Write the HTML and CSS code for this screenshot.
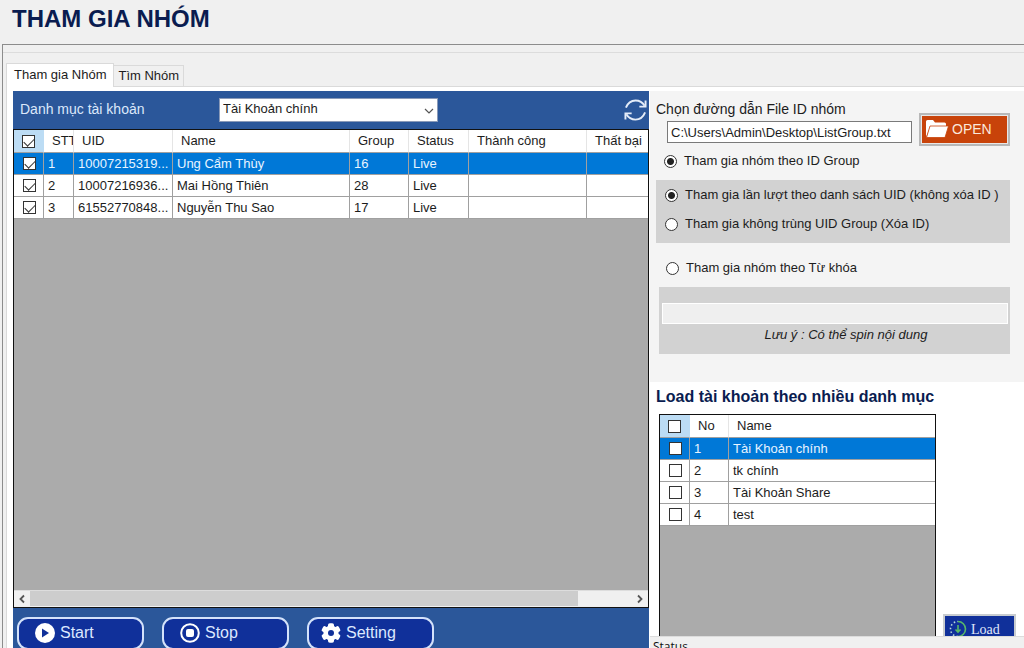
FILE: index.html
```html
<!DOCTYPE html>
<html lang="vi">
<head>
<meta charset="utf-8">
<title>Tham gia nhóm</title>
<link rel="stylesheet" href="styles.css">
</head>
<body>
<header class="title-bar"><h1>THAM GIA NHÓM</h1></header>
<main class="frame">
  <div class="frame-inner">
    <nav class="tabs" role="tablist">
      <button class="tab tab-active" role="tab" aria-selected="true">Tham gia Nhóm</button>
      <button class="tab" role="tab" aria-selected="false">Tìm Nhóm</button>
    </nav>
    <div class="page">
      <section class="accounts">
        <div class="toolbar">
          <label class="toolbar-label" for="category">Danh mục tài khoản</label>
          <div class="combo">
            <select id="category"><option>Tài Khoản chính</option></select>
            <svg class="combo-arrow" viewBox="0 0 10 6"><path d="M1 1l4 4 4-4" fill="none" stroke="#555" stroke-width="1.2"/></svg>
          </div>
          <button class="refresh" aria-label="Refresh">
            <svg viewBox="0 0 24 24" fill="none" stroke="#e4ecf8" stroke-width="2"><path d="M2 9.500C4 4.500 8 2 12 2s7.500 2 9.500 5.500M22 14.500C20 19.500 16 22 12 22s-7.500-2-9.500-5.500"/><path d="M22.500 2v6.500H16M1.500 22v-6.500H8"/></svg>
          </button>
        </div>
        <div class="grid">
          <table class="table">
            <colgroup><col class="c-check"><col class="c-stt"><col class="c-uid"><col><col class="c-small"><col class="c-status"><col class="c-success"><col class="c-fail"></colgroup>
            <thead><tr><th class="check-head"><input type="checkbox" class="check" aria-label="All accounts" checked></th><th>STT</th><th>UID</th><th>Name</th><th>Group</th><th>Status</th><th>Thành công</th><th>Thất bại</th></tr></thead>
            <tbody>
              <tr class="selected"><td class="check-cell"><input type="checkbox" class="check" aria-label="Account 1" checked></td><td>1</td><td>10007215319...</td><td>Ung Cẩm Thùy</td><td>16</td><td>Live</td><td></td><td></td></tr>
              <tr><td class="check-cell"><input type="checkbox" class="check" aria-label="Account 2" checked></td><td>2</td><td>10007216936...</td><td>Mai Hồng Thiên</td><td>28</td><td>Live</td><td></td><td></td></tr>
              <tr><td class="check-cell"><input type="checkbox" class="check" aria-label="Account 3" checked></td><td>3</td><td>61552770848...</td><td>Nguyễn Thu Sao</td><td>17</td><td>Live</td><td></td><td></td></tr>
            </tbody>
          </table>
          <div class="scrollbar">
            <svg class="scroll-arrow" viewBox="0 0 16 16"><path d="M10 4.500L6.500 8l3.500 3.500" fill="none" stroke="#555" stroke-width="1.800"/></svg>
            <div class="track"><div class="thumb"></div></div>
            <svg class="scroll-arrow" viewBox="0 0 16 16"><path d="M6 4.500L9.500 8 6 11.500" fill="none" stroke="#555" stroke-width="1.800"/></svg>
          </div>
        </div>
        <div class="actions">
          <button class="action">
            <svg viewBox="0 0 20 20"><circle cx="10" cy="10" r="10" fill="#fff"/><path d="M7 5.500v9l7-4.500z" fill="#10309a"/></svg>Start</button>
          <button class="action">
            <svg viewBox="0 0 20 20"><circle cx="10" cy="10" r="8.800" fill="none" stroke="#fff" stroke-width="2"/><rect x="6" y="6" width="8" height="8" rx="2" fill="#fff"/></svg>Stop</button>
          <button class="action">
            <svg viewBox="0 0 20 20"><g fill="#fff"><circle cx="10" cy="10" r="7.600"/><rect x="7" y="0.200" width="6" height="19.600" rx="1.800"/><rect x="7" y="0.200" width="6" height="19.600" rx="1.800" transform="rotate(60 10 10)"/><rect x="7" y="0.200" width="6" height="19.600" rx="1.800" transform="rotate(120 10 10)"/></g><circle cx="10" cy="10" r="3" fill="#10309a"/></svg>Setting</button>
        </div>
      </section>
      <aside class="side">
        <form class="options">
          <div class="file-row">
            <div class="file-field">
              <label for="path">Chọn đường dẫn File ID nhóm</label>
              <input id="path" class="path" type="text" value="C:\Users\Admin\Desktop\ListGroup.txt">
            </div>
            <button type="button" class="open">
              <svg viewBox="0 0 24 20"><path d="M1 18V2.500Q1 1 2.500 1H8l2 2.500h9.500Q21 3.500 21 5v2H5.500z" fill="#fff"/><path d="M5 7h18.500L20 18.500H1.500z" fill="#fff" stroke="#c8430a" stroke-width=".8"/></svg>OPEN</button>
          </div>
          <label class="radio-row"><input type="radio" name="mode" class="radio" checked>Tham gia nhóm theo ID Group</label>
          <div class="group-box">
            <label class="radio-row"><input type="radio" name="order" class="radio" checked>Tham gia lần lượt theo danh sách UID (không xóa ID )</label>
            <label class="radio-row"><input type="radio" name="order" class="radio">Tham gia không trùng UID Group (Xóa ID)</label>
          </div>
          <label class="radio-row keyword-row"><input type="radio" name="mode" class="radio">Tham gia nhóm theo Từ khóa</label>
          <div class="keyword-box">
            <input class="keyword" type="text" aria-label="Từ khóa">
            <p class="note">Lưu ý : Có thể spin nội dung</p>
          </div>
        </form>
        <section class="categories">
          <h2>Load tài khoản theo nhiều danh mục</h2>
          <div class="category-row">
            <div class="grid category-grid">
              <table class="table">
                <colgroup><col class="c-check"><col class="c-no"><col></colgroup>
                <thead><tr><th class="check-head"><input type="checkbox" class="check" aria-label="All categories"></th><th>No</th><th>Name</th></tr></thead>
                <tbody>
                  <tr class="selected"><td class="check-cell"><input type="checkbox" class="check" aria-label="Category 1"></td><td>1</td><td>Tài Khoản chính</td></tr>
                  <tr><td class="check-cell"><input type="checkbox" class="check" aria-label="Category 2"></td><td>2</td><td>tk chính</td></tr>
                  <tr><td class="check-cell"><input type="checkbox" class="check" aria-label="Category 3"></td><td>3</td><td>Tài Khoản Share</td></tr>
                  <tr><td class="check-cell"><input type="checkbox" class="check" aria-label="Category 4"></td><td>4</td><td>test</td></tr>
                </tbody>
              </table>
            </div>
            <button class="load">
              <svg viewBox="0 0 18 18" fill="none" stroke="#58b868" stroke-width="1.600"><path d="M9 1.500a7.500 7.500 0 0 1 0 15"/><path d="M9 16.500a7.500 7.500 0 0 1 0-15" stroke="#b8d8d8" stroke-dasharray="1.600 2.200"/><path d="M9 5v7M6.500 9.500L9 12l2.500-2.500"/></svg>Load</button>
          </div>
        </section>
        <footer class="status">Status</footer>
      </aside>
    </div>
  </div>
</main>
</body>
</html>
```
FILE: styles.css
```css
* { box-sizing: border-box; }
body {
  margin: 0;
  height: 100vh;
  display: flex;
  flex-direction: column;
  overflow: hidden;
  background: #f0f0f0;
  color: #1c1c1c;
  font: 13px/18px "Liberation Sans", Arial, sans-serif;
}
h1, h2, p { margin: 0; }
button, input, select { font: inherit; color: inherit; margin: 0; padding: 0; border: 0; border-radius: 0; }
svg { flex: none; display: block; }

.title-bar { height: 44px; flex: none; padding: 5px 12px; }
h1 { font-size: 24px; line-height: 28px; color: #0a1c50; }

.frame { flex: 1; min-height: 0; margin-left: 2px; border: solid #8c8c8c; border-width: 1px 0 0 1px; padding-top: 7px; display: flex; }
.frame-inner { flex: 1; min-width: 0; border-top: 1px solid #dcdcdc; padding: 10px 0 0 3px; display: flex; flex-direction: column; }

.tabs { display: flex; align-items: flex-end; flex: none; height: 23px; }
.tab { height: 21px; padding: 0 4px; border: 1px solid #dadada; border-bottom: 0; border-left: 0; background: #f0f0f0; }
.tab-active { height: 24px; padding: 0 7px 2px; border-left: 1px solid #dadada; background: #fff; position: relative; top: 1px; }

.page { flex: 1; min-height: 0; display: flex; gap: 1px; background: #fff; padding: 4px 0 0 6px; border: solid #dadada; border-width: 1px 0 0 1px; }
.accounts { flex: 1; min-width: 0; display: flex; flex-direction: column; background: #2b579a; }
.toolbar { flex: none; height: 38px; display: flex; align-items: center; padding: 0 2px 0 7px; }
.toolbar-label { width: 199px; color: #dce8fa; font-size: 14px; padding-bottom: 2px; }
.combo { width: 219px; position: relative; }
.combo select { width: 100%; height: 24px; appearance: none; background: #fff; border: 1px solid #8a9ab8; padding: 0 20px 2px 3px; }
.combo-arrow { position: absolute; right: 4px; top: 10px; width: 10px; height: 6px; pointer-events: none; }
.refresh { margin-left: auto; background: none; }
.refresh svg { width: 23px; height: 24px; }

.grid { flex: 1; min-height: 0; display: flex; flex-direction: column; background: #ababab; border: 1px solid #111; }
.table { width: 100%; table-layout: fixed; border-collapse: separate; border-spacing: 0; background: #fff; }
.table th { height: 23px; padding: 0 0 0 8px; text-align: left; font-weight: normal; border: solid #e5e5e5; border-width: 0 1px 0 0; border-bottom: 1px solid #a0a0a0; white-space: nowrap; overflow: hidden; text-overflow: clip; }
.table td { height: 22px; padding: 0 0 0 4px; border: solid #a0a0a0; border-width: 0 1px 1px 0; white-space: nowrap; overflow: hidden; }
.table th:last-child, .table td:last-child { border-right: 0; }
.table .check-head { background: #bcdcf4; padding: 0; padding-left: 8px; border-right-color: #bcdcf4; }
.table .check-cell { padding-left: 9px; }
.selected td { background: #0078d7; color: #e8f4ff; }
.c-check { width: 30px; }
.c-stt { width: 30px; }
.c-uid { width: 99px; }
.c-small { width: 59px; }
.c-status { width: 60px; }
.c-success { width: 118px; }
.c-fail { width: 61px; }
.c-no { width: 39px; }
.check { appearance: none; display: block; width: 13px; height: 13px; border: 1px solid #333; background: #fff; }
.check:checked::before { content: ""; display: block; width: 9px; height: 5px; margin: 2px 1px; border: solid #333; border-width: 0 0 1px 1px; transform: rotate(-45deg); }

.scrollbar { flex: none; margin-top: auto; height: 17px; display: flex; background: #f0f0f0; border-top: 1px solid #ddd; }
.scroll-arrow { width: 16px; height: 16px; }
.track { flex: 1; }
.thumb { width: 91%; height: 15px; background: #cdcdcd; }

.actions { flex: none; height: 40px; display: flex; gap: 18px; padding: 9px 4px 0; }
.action { width: 127px; height: 33px; flex: none; display: flex; align-items: center; gap: 5px; padding: 0 0 2px 16px; background: #10309a; border: 2px solid #d4e2fa; border-radius: 11px; color: #dce8ff; font-size: 16px; }
.action:last-child { padding-left: 12px; }
.action svg { width: 20px; height: 20px; }

.side { width: 374px; flex: none; display: flex; flex-direction: column; min-height: 0; }
.options { flex: none; height: 291px; background: #f4f4f4; padding: 9px 14px 0 6px; }
.file-row { display: flex; justify-content: space-between; align-items: flex-end; }
.file-field { flex: 1; max-width: 255px; }
.file-field label { display: block; font-size: 14px; line-height: 18px; margin-bottom: 3px; }
.path { display: block; width: 245px; height: 22px; margin-left: 11px; padding: 0 3px; background: #fff; border: 1px solid #7a7a7a; }
.open { width: 91px; height: 33px; margin-bottom: -3px; display: flex; align-items: center; gap: 3px; padding: 0 0 2px 4px; background: #c8430a; border: 2px solid #b8b8b8; outline: 1px solid #e8e8e8; outline-offset: -3px; color: #fbe8dc; font-size: 14px; }
.open svg { width: 24px; height: 20px; }
.radio-row { display: flex; align-items: center; gap: 7px; height: 18px; margin: 9px 0 0 8px; white-space: nowrap; }
.radio { appearance: none; flex: none; width: 13px; height: 13px; border: 1px solid #333; border-radius: 50%; background: #fff; }
.radio:checked { background: radial-gradient(circle, #222 0 3px, #fff 4px); }
.group-box { height: 63px; margin-top: 10px; padding-top: 6px; background: #d2d2d2; display: flex; flex-direction: column; gap: 11px; }
.group-box .radio-row { margin: 0 0 0 9px; }
.keyword-row { margin: 16px 0 0 10px; }
.keyword-box { height: 67px; margin: 10px 0 0 3px; padding: 16px 2px 0 3px; background: #d2d2d2; }
.keyword { display: block; width: 100%; height: 21px; background: #efefef; border: 1px solid #fff; }
.note { margin-top: 2px; padding-left: 22px; text-align: center; font-style: italic; }

.categories { flex: 1; min-height: 0; display: flex; flex-direction: column; background: #fff; padding: 5px 8px 0 6px; }
h2 { font-size: 16px; line-height: 20px; color: #0a1c50; margin-bottom: 7px; }
.category-row { flex: 1; min-height: 0; display: flex; justify-content: space-between; align-items: flex-end; padding-left: 3px; }
.category-grid { flex: none; width: 277px; align-self: stretch; border-bottom: 0; }
.load { width: 73px; height: 22px; display: flex; align-items: flex-start; gap: 4px; padding: 4px 0 0 4px; background: #10309a; border: 2px solid #c8ccd0; border-bottom: 0; color: #e0e8fa; font: 14px/20px "Liberation Serif", serif; overflow: hidden; }
.load svg { width: 18px; height: 18px; }
.status { flex: none; height: 12px; border-top: 1px solid #dcdcdc; background: #f0f0f0; padding: 1px 3px 0; font: 12px/18px "Open Sans", sans-serif; color: #111; overflow: hidden; }
```
